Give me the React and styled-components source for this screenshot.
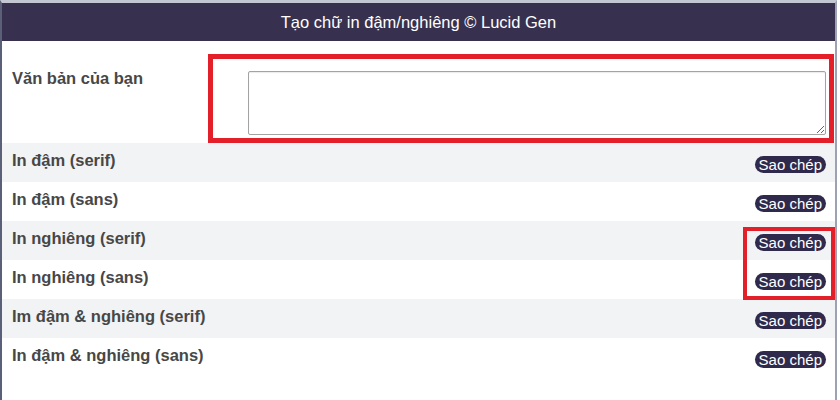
import React from 'react';
import styled, { createGlobalStyle } from 'styled-components';

const GlobalStyle = createGlobalStyle`
  html, body {
    margin: 0;
    padding: 0;
    background: #ffffff;
    font-family: "Liberation Sans", Arial, sans-serif;
  }
`;

const Frame = styled.div`
  width: 833px;
  height: 397px;
  border-top: 3px solid #c3c7d2;
  border-left: 2px solid #5b6079;
  border-right: 2px solid #9ca2b3;
  display: flex;
  flex-direction: column;
  background: #ffffff;
`;

const Header = styled.header`
  height: 38px;
  background: #37314f;
  color: #ffffff;
  font-size: 16.5px;
  display: flex;
  align-items: center;
  justify-content: center;
`;

const InputSection = styled.section`
  display: flex;
  align-items: flex-start;
  padding: 13px 1px 0 10px;
  height: 89px;
`;

const Label = styled.div`
  color: #474747;
  font-weight: bold;
  font-size: 16.5px;
  line-height: 19px;
  width: ${(p) => (p.$wide ? '196px' : 'auto')};
  padding-top: ${(p) => (p.$wide ? '15px' : '0')};
  padding-bottom: ${(p) => (p.$wide ? '0' : '4px')};
`;

const Highlight = styled.div`
  flex: 1;
  display: flex;
  border: 5px solid #e3202a;
  padding: 12px 3px 3px 35px;
`;

const TextBox = styled.textarea`
  flex: 1;
  height: 64px;
  box-sizing: border-box;
  border: 1px solid #a3a3a3;
  border-radius: 2px;
  box-shadow: inset 0 1px 1px rgba(0, 0, 0, 0.08);
  resize: both;
  font-family: inherit;
`;

const Rows = styled.div`
  position: relative;
  display: flex;
  flex-direction: column;
`;

const Row = styled.div`
  height: 39px;
  display: flex;
  align-items: center;
  justify-content: space-between;
  padding: 0 9px 0 10px;
  background: ${(p) => (p.$shaded ? '#f2f3f5' : '#ffffff')};
`;

const CopyButton = styled.button`
  margin-top: 3px;
  height: 17px;
  padding: 0 4px;
  border: none;
  border-radius: 9px;
  background: #2f2a4c;
  color: #ffffff;
  font-family: "Liberation Sans", Arial, sans-serif;
  font-size: 15px;
  line-height: 17px;
  cursor: pointer;
`;

const Marker = styled.div`
  position: absolute;
  top: 84px;
  left: 741px;
  width: 92px;
  height: 73px;
  box-sizing: border-box;
  border: 4px solid #e3202a;
  pointer-events: none;
`;

const styles = [
  'In đậm (serif)',
  'In đậm (sans)',
  'In nghiêng (serif)',
  'In nghiêng (sans)',
  'Im đậm & nghiêng (serif)',
  'In đậm & nghiêng (sans)',
];

export default function App() {
  return (
    <>
      <GlobalStyle />
      <Frame>
        <Header>Tạo chữ in đậm/nghiêng © Lucid Gen</Header>
        <InputSection>
          <Label $wide>Văn bản của bạn</Label>
          <Highlight>
            <TextBox />
          </Highlight>
        </InputSection>
        <Rows>
          {styles.map((name, i) => (
            <Row key={name} $shaded={i % 2 === 0}>
              <Label>{name}</Label>
              <CopyButton>Sao chép</CopyButton>
            </Row>
          ))}
          <Marker />
        </Rows>
      </Frame>
    </>
  );
}
